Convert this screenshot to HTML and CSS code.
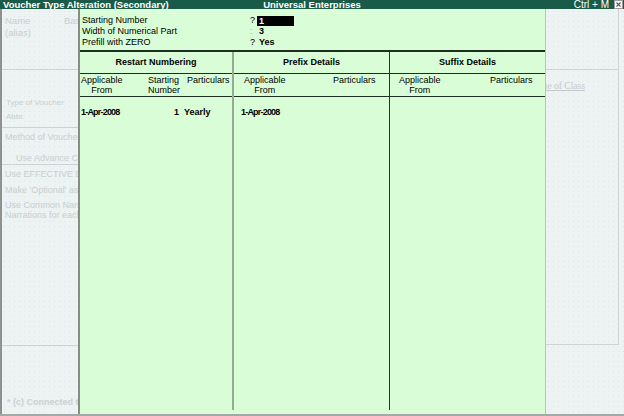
FILE: index.html
```html
<!DOCTYPE html>
<html>
<head>
<meta charset="utf-8">
<title>Voucher Type Alteration (Secondary)</title>
<link rel="stylesheet" href="styles.css">
</head>
<body>
<div class="screen">
  <header class="titlebar">
    <span class="t-left">Voucher Type Alteration (Secondary)</span>
    <span class="t-center">Universal Enterprises</span>
    <span class="t-right">Ctrl + M
      <span class="close"><svg width="9" height="9" viewBox="0 0 9 9"><rect x="0.5" y="0.5" width="8" height="8" fill="#fff" stroke="#9a9a9a"/><path d="M2.5 2.5 L6.5 6.5 M6.5 2.5 L2.5 6.5" stroke="#555" stroke-width="1.1"/></svg></span>
    </span>
  </header>
  <div class="main">
    <aside class="bg-left">
      <div class="bl-a">
        <div class="bl-row"><span class="bl-name">Name</span><span>Base</span></div>
        <div class="bl-row">(alias)</div>
      </div>
      <div class="bl-b">
        <div class="bl-small">Type of Voucher</div>
        <div class="bl-small">Abbr.</div>
      </div>
      <div class="bl-c">
        <div class="bl-row">Method of Voucher Numbering</div>
        <div class="bl-row bl-indent">Use Advance Configuration</div>
      </div>
      <div class="bl-d">
        <div class="bl-row">Use EFFECTIVE Dates for Vouchers</div>
        <div class="bl-row bl-gap">Make 'Optional' as default</div>
        <div class="bl-two">Use Common Narration<br>Narrations for each entry</div>
      </div>
      <div class="bl-e">
        <div class="bl-copy">* (c) Connected to Tally</div>
      </div>
    </aside>

    <section class="dialog">
      <div class="fields">
        <div class="field"><span class="label">Starting Number</span><span class="sep">?</span><span class="val cursor">1</span></div>
        <div class="field"><span class="label">Width of Numerical Part</span><span class="sep faint">:</span><span class="val">3</span></div>
        <div class="field"><span class="label">Prefill with ZERO</span><span class="sep">?</span><span class="val">Yes</span></div>
      </div>
      <div class="table">
        <div class="col col1">
          <div class="col-head">Restart Numbering</div>
          <div class="sub-head sh1">
            <span class="app">Applicable<br>From</span>
            <span>Starting<br>Number</span>
            <span>Particulars</span>
          </div>
          <div class="data-row dr1">
            <span class="date">1-Apr-2008</span>
            <span class="num">1</span>
            <span class="per">Yearly</span>
          </div>
        </div>
        <div class="col col2">
          <div class="col-head">Prefix Details</div>
          <div class="sub-head sh2">
            <span class="app">Applicable<br>From</span>
            <span>Particulars</span>
          </div>
          <div class="data-row dr2">
            <span class="date">1-Apr-2008</span>
          </div>
        </div>
        <div class="col col3">
          <div class="col-head">Suffix Details</div>
          <div class="sub-head sh3">
            <span class="app">Applicable<br>From</span>
            <span>Particulars</span>
          </div>
        </div>
      </div>
    </section>

    <aside class="bg-right">
      <div class="br-box">
        <div class="br-a"></div>
        <div class="br-b"><span class="br-class">Name of Class</span></div>
      </div>
    </aside>
  </div>
</div>
</body>
</html>
```

FILE: styles.css
```css
* {
  box-sizing: border-box;
  margin: 0;
  padding: 0;
}

html, body {
  width: 624px;
  height: 416px;
  overflow: hidden;
}

body {
  font-family: "Liberation Sans", Arial, sans-serif;
  font-size: 9px;
  color: #000;
  background: #edf2f2;
}

.screen {
  width: 624px;
  height: 416px;
  display: flex;
  flex-direction: column;
}

/* ---------- title bar ---------- */
.titlebar {
  height: 9px;
  flex: none;
  background: #1a5a48;
  color: #fff;
  display: grid;
  grid-template-columns: 1fr auto 1fr;
  white-space: nowrap;
  line-height: 9px;
  overflow: hidden;
}

.t-left {
  padding-left: 3px;
  font-weight: bold;
  font-size: 9.5px;
}

.t-center {
  font-weight: bold;
  font-size: 9.5px;
}

.t-right {
  justify-self: end;
  display: flex;
  align-items: center;
  gap: 5px;
  padding-right: 1px;
  font-size: 10px;
}

.close {
  display: block;
  width: 9px;
  height: 9px;
}

.close svg {
  display: block;
}

/* ---------- main area ---------- */
.main {
  flex: 1;
  min-height: 0;
  display: flex;
  border-bottom: 2px solid #a3aaa6;
}

.bg-left,
.bg-right {
  background-color: #edf2f2;
  background-image: radial-gradient(circle, #dfe6e6 0.6px, transparent 0.8px);
  background-size: 5px 5px;
  color: #c8cfcf;
  white-space: nowrap;
  overflow: hidden;
  font-size: 9px;
}

.bg-left {
  width: 78px;
  flex: none;
  border-left: 2px solid #8f9191;
}

.bl-row {
  height: 12px;
  line-height: 12px;
  padding-left: 3px;
}

.bl-a {
  height: 61px;
  padding-top: 6px;
  border-bottom: 1px solid #cdd3d3;
}

.bl-a .bl-row {
  font-size: 9.5px;
}

.bl-name {
  display: inline-block;
  width: 59px;
}

.bl-b {
  height: 58px;
  padding-top: 26px;
  border-bottom: 1px solid #cdd3d3;
}

.bl-small {
  font-size: 8px;
  height: 14px;
  line-height: 14px;
  padding-left: 4px;
}

.bl-c {
  height: 37px;
  padding-top: 2.5px;
  border-bottom: 1px solid #cdd3d3;
}

.bl-indent {
  margin-top: 9px;
  padding-left: 14px;
}

.bl-d {
  height: 181px;
  padding-top: 3px;
  border-bottom: 1px solid #cdd3d3;
}

.bl-gap {
  margin-top: 3.5px;
}

.bl-two {
  margin-top: 4.5px;
  line-height: 10px;
  padding-left: 3px;
}

.bl-e {
  padding-top: 49.5px;
}

.bl-copy {
  height: 12px;
  line-height: 12px;
  padding-left: 5px;
  font-weight: bold;
  font-size: 9px;
  color: #cbd1d1;
}

.bg-right {
  flex: 1;
}

.br-box {
  width: 73px;
  height: 336px;
  border-right: 1px solid #cdd3d3;
  border-bottom: 1px solid #cdd3d3;
}

.br-a {
  height: 61px;
  border-bottom: 1px solid #cdd3d3;
}

.br-b {
  padding-top: 10px;
  line-height: 12px;
}

.br-class {
  display: inline-block;
  margin-left: -17px;
  font-family: "Liberation Serif", "Times New Roman", serif;
  font-size: 9.5px;
  text-decoration: underline;
  color: #c3cbcb;
}

/* ---------- dialog ---------- */
.dialog {
  width: 468px;
  flex: none;
  background: #d9fdd6;
  border-left: 2px solid #868c86;
  border-right: 1px solid #b9c4b9;
  display: flex;
  flex-direction: column;
  padding-bottom: 4px;
}

.fields {
  padding: 6px 0 2px 2px;
}

.field {
  display: flex;
  height: 11px;
  line-height: 11px;
  white-space: nowrap;
}

.label {
  width: 168px;
}

.sep {
  width: 7px;
}

.faint {
  color: #9db39b;
}

.val {
  font-weight: bold;
  padding-left: 2px;
}

.cursor {
  background: #000;
  color: #fff;
  width: 37px;
  height: 10px;
  line-height: 10px;
  margin-top: 1px;
}

.table {
  flex: 1;
  display: flex;
  border-top: 2px solid #1e2e21;
}

.col {
  display: flex;
  flex-direction: column;
}

.col1 {
  width: 154px;
  border-right: 2px solid #94ad92;
}

.col2 {
  width: 156px;
  border-right: 1px solid #26372a;
}

.col3 {
  width: 155px;
}

.col-head {
  height: 22px;
  line-height: 21px;
  text-align: center;
  font-weight: bold;
  border-bottom: 1px solid #1e2e21;
  white-space: nowrap;
}

.sub-head {
  height: 23px;
  padding-top: 1px;
  line-height: 10px;
  border-bottom: 1px solid #1e2e21;
  display: grid;
  white-space: nowrap;
}

.app {
  display: inline-block;
  justify-self: start;
  text-align: center;
}

.sh1 {
  padding-left: 1px;
  grid-template-columns: 67px 39px 1fr;
}

.sh2 {
  padding-left: 10px;
  grid-template-columns: 89px 1fr;
}

.sh3 {
  padding-left: 9px;
  grid-template-columns: 91px 1fr;
}

.data-row {
  padding-top: 10px;
  line-height: 11px;
  display: grid;
  font-weight: bold;
  white-space: nowrap;
}

.dr1 {
  padding-left: 1px;
  grid-template-columns: 67px 31px 1fr;
}

.dr2 {
  padding-left: 7px;
  grid-template-columns: 1fr;
}

.date {
  letter-spacing: -0.8px;
}

.num {
  text-align: right;
}

.per {
  padding-left: 5px;
}
```
